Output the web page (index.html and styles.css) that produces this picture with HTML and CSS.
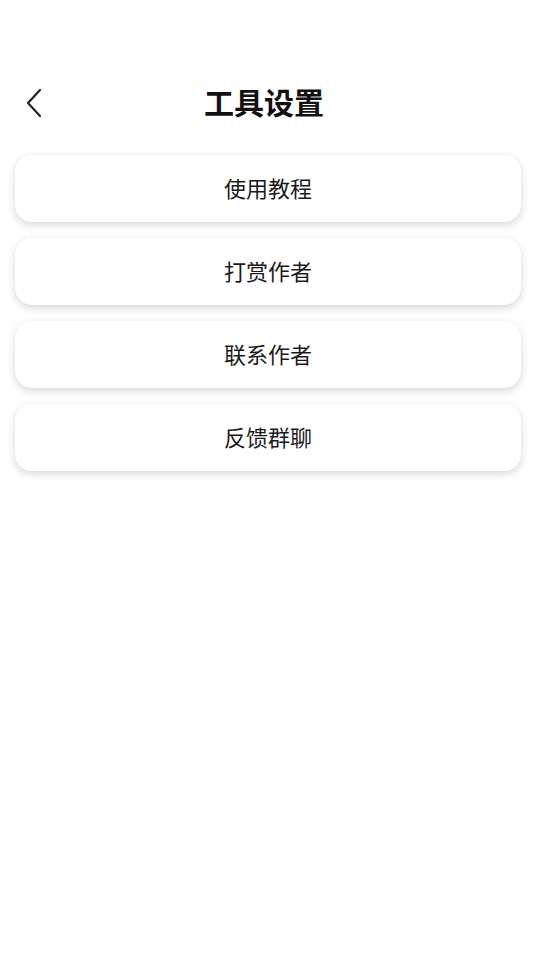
FILE: index.html
```html
<!DOCTYPE html>
<html>

<head>
    <meta charset="utf-8">
    <title>工具设置</title>
    <link rel="stylesheet" href="styles.css">
</head>

<body>
    <div class="header">
        <a class="back" href="javascript:;">
            <svg width="20" height="30" viewBox="0 0 20 30">
                <path d="M16 2 L4 15 L16 28" fill="none" stroke="#222" stroke-width="2.2" stroke-linecap="round" stroke-linejoin="round" />
            </svg>
        </a>
        <h1 class="title">工具设置</h1>
    </div>
    <div class="menu">
        <a class="item" href="javascript:;">使用教程</a>
        <a class="item" href="javascript:;">打赏作者</a>
        <a class="item" href="javascript:;">联系作者</a>
        <a class="item" href="javascript:;">反馈群聊</a>
    </div>
</body>

</html>
```

FILE: styles.css
```css
* {
    margin: 0;
    padding: 0;
    box-sizing: border-box;
}

a {
    text-decoration: none;
}

body {
    width: 536px;
    height: 954px;
    background: #fff;
    font-family: "Noto Sans CJK SC", "Noto Sans", sans-serif;
    color: #111;
}

.header {
    position: relative;
    height: 80px;
    margin-top: 63px;
    display: flex;
    align-items: center;
    justify-content: center;
}

.back {
    position: absolute;
    left: 24px;
    top: 25px;
    display: block;
    width: 20px;
    height: 30px;
}

.title {
    font-size: 30px;
    font-weight: bold;
    line-height: 76px;
    margin-bottom: 4px;
    margin-left: -8px;
    color: #111;
}

.menu {
    padding: 12px 15px 0;
    display: flex;
    flex-direction: column;
    gap: 16px;
}

.item {
    display: block;
    height: 67px;
    line-height: 64px;
    text-align: center;
    font-size: 22px;
    color: #1a1a1a;
    background: #fff;
    border-radius: 17px;
    box-shadow: 0 3px 8px rgba(0, 0, 0, .16);
}
```
